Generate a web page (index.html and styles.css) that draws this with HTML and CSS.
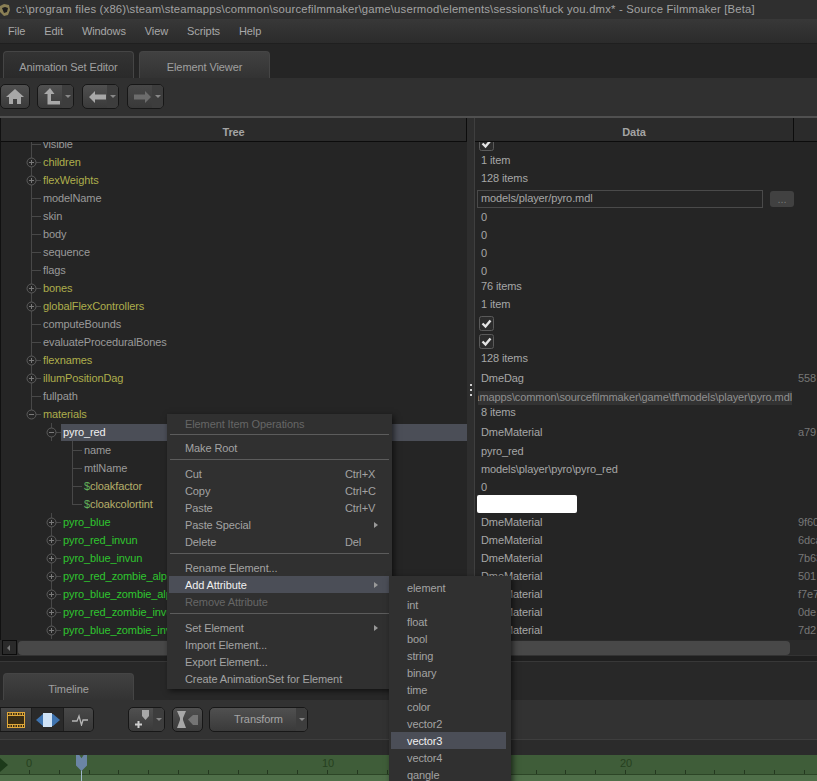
FILE: index.html
```html
<!DOCTYPE html>
<html lang="en">
<head>
<meta charset="utf-8">
<title>Source Filmmaker</title>
<link rel="stylesheet" href="styles.css">
</head>
<body>
<svg class="defs" width="0" height="0">
  <symbol id="plus" viewBox="0 0 11 11"><circle cx="5.5" cy="5.5" r="4.5" fill="#262626" stroke="#5c5c5c"/><path d="M3 5.5h5M5.5 3v5" stroke="#7a7a7a"/></symbol>
  <symbol id="minus" viewBox="0 0 11 11"><circle cx="5.5" cy="5.5" r="4.5" fill="#262626" stroke="#5c5c5c"/><path d="M3 5.5h5" stroke="#7a7a7a"/></symbol>
  <symbol id="check" viewBox="0 0 15 15"><rect x=".5" y=".5" width="14" height="14" rx="2" fill="#2c2c2c" stroke="#5a5a5a"/><path d="M3.5 7.5l3 3 5-6" fill="none" stroke="#e4e4e4" stroke-width="2.4"/></symbol>
</svg>
<div class="app">
  <header class="title">
    <svg class="logo" width="10" height="14" viewBox="0 0 10 14"><path d="M0 3l4-2 5 1 1 5-2 5-4 1-4-4z" fill="#8a7f55"/><path d="M2 5l3-1 3 1-1 4-3 1z" fill="#1d1d1d"/></svg>
    <span>c:\program files (x86)\steam\steamapps\common\sourcefilmmaker\game\usermod\elements\sessions\fuck you.dmx* - Source Filmmaker [Beta]</span>
  </header>
  <nav class="menubar">
    <span>File</span><span>Edit</span><span>Windows</span><span>View</span><span>Scripts</span><span>Help</span>
  </nav>
  <div class="tabs">
    <div class="tab">Animation Set Editor</div>
    <div class="tab on">Element Viewer</div>
  </div>
  <div class="toolbar">
    <button class="btn home"><svg width="18" height="15" viewBox="0 0 18 15"><path d="M9 0L0 8h3v7h4v-5h4v5h4V8h3z" fill="#a8a8a8"/></svg></button>
    <button class="btn drop"><svg width="16" height="17" viewBox="0 0 16 17"><path d="M6 0L0 6h3.500v10.500H16v-3.500H7V6h3.500z" fill="#a8a8a8"/></svg><i></i></button>
    <button class="btn drop"><svg width="17" height="12" viewBox="0 0 17 12"><path d="M6 0L0 6l6 6V8.500h11v-5H6z" fill="#a8a8a8"/></svg><i></i></button>
    <button class="btn drop off"><svg width="17" height="12" viewBox="0 0 17 12"><path d="M11 0l6 6-6 6V8.500H0v-5h11z" fill="#6c6c6c"/></svg><i></i></button>
  </div>
  <main class="panes">
    <section class="pane tree">
      <div class="head">Tree</div>
      <ul class="rows">
        <li class="d1 gr">visible</li>
        <li class="d1 ye"><svg class="exp"><use href="#plus"/></svg>children</li>
        <li class="d1 ye"><svg class="exp"><use href="#plus"/></svg>flexWeights</li>
        <li class="d1 gr">modelName</li>
        <li class="d1 gr">skin</li>
        <li class="d1 gr">body</li>
        <li class="d1 gr">sequence</li>
        <li class="d1 gr">flags</li>
        <li class="d1 ye"><svg class="exp"><use href="#plus"/></svg>bones</li>
        <li class="d1 ye"><svg class="exp"><use href="#plus"/></svg>globalFlexControllers</li>
        <li class="d1 gr">computeBounds</li>
        <li class="d1 gr">evaluateProceduralBones</li>
        <li class="d1 ye"><svg class="exp"><use href="#plus"/></svg>flexnames</li>
        <li class="d1 ye"><svg class="exp"><use href="#plus"/></svg>illumPositionDag</li>
        <li class="d1 gr">fullpath</li>
        <li class="d1 ye last"><svg class="exp"><use href="#minus"/></svg>materials</li>
        <li class="d2 sel"><svg class="exp"><use href="#minus"/></svg><span>pyro_red</span></li>
        <li class="d3 gr">name</li>
        <li class="d3 gr">mtlName</li>
        <li class="d3 ye2"><b>$</b>cloakfactor</li>
        <li class="d3 ye2 last"><b>$</b>cloakcolortint</li>
        <li class="d2 gn"><svg class="exp"><use href="#plus"/></svg>pyro_blue</li>
        <li class="d2 gn"><svg class="exp"><use href="#plus"/></svg>pyro_red_invun</li>
        <li class="d2 gn"><svg class="exp"><use href="#plus"/></svg>pyro_blue_invun</li>
        <li class="d2 gn"><svg class="exp"><use href="#plus"/></svg>pyro_red_zombie_alpha</li>
        <li class="d2 gn"><svg class="exp"><use href="#plus"/></svg>pyro_blue_zombie_alpha</li>
        <li class="d2 gn"><svg class="exp"><use href="#plus"/></svg>pyro_red_zombie_invun</li>
        <li class="d2 gn"><svg class="exp"><use href="#plus"/></svg>pyro_blue_zombie_invun</li>
      </ul>
    </section>
    <div class="split"><i></i><i></i><i></i></div>
    <section class="pane data">
      <div class="head"><span class="c1">Data</span><span class="c2"></span></div>
      <ul class="rows">
        <li class="cb"><svg class="chk"><use href="#check"/></svg></li>
        <li class="up">1 item</li>
        <li class="up">128 items</li>
        <li class="field-row"><span class="field">models/player/pyro.mdl</span><span class="more">...</span></li>
        <li class="dn">0</li>
        <li class="dn">0</li>
        <li class="dn">0</li>
        <li class="dn">0</li>
        <li class="up">76 items</li>
        <li class="up">1 item</li>
        <li class="cb"><svg class="chk"><use href="#check"/></svg></li>
        <li class="cb"><svg class="chk"><use href="#check"/></svg></li>
        <li class="up">128 items</li>
        <li class="m"><span class="v">DmeDag</span><span class="id">558</span></li>
        <li class="path"><span>steamapps\common\sourcefilmmaker\game\tf\models\player\pyro.mdl</span></li>
        <li class="up">8 items</li>
        <li class="m"><span class="v">DmeMaterial</span><span class="id">a79</span></li>
        <li class="dn">pyro_red</li>
        <li class="dn">models\player\pyro\pyro_red</li>
        <li class="dn">0</li>
        <li class="swatch-row"><span class="swatch"></span></li>
        <li class="m"><span class="v">DmeMaterial</span><span class="id">9f60</span></li>
        <li class="m"><span class="v">DmeMaterial</span><span class="id">6dca</span></li>
        <li class="m"><span class="v">DmeMaterial</span><span class="id">7b63</span></li>
        <li class="m"><span class="v">DmeMaterial</span><span class="id">501</span></li>
        <li class="m"><span class="v">DmeMaterial</span><span class="id">f7e7</span></li>
        <li class="m"><span class="v">DmeMaterial</span><span class="id">0de</span></li>
        <li class="m"><span class="v">DmeMaterial</span><span class="id">7d2</span></li>
      </ul>
    </section>
  </main>
  <div class="hscroll"><span class="arrow"></span><span class="thumb"></span></div>
  <div class="gap"></div>
  <div class="tabs low"><div class="tab on">Timeline</div></div>
  <div class="tl-bar">
    <div class="group">
      <button class="seg film"><svg width="18" height="16" viewBox="0 0 18 16"><rect x=".5" y=".5" width="17" height="15" fill="#3a2d14" stroke="#e0a83a"/><path d="M1 3.500h16M1 12.500h16M3 1v2M5.500 1v2M8 1v2M10.500 1v2M13 1v2M15.500 1v2M3 13v2M5.500 13v2M8 13v2M10.500 13v2M13 13v2M15.500 13v2" stroke="#e0a83a"/></svg></button>
      <button class="seg act"><svg width="24" height="14" viewBox="0 0 24 14"><path d="M0 7l7-6h10l7 6-7 6H7z" fill="#3f74b0"/><rect x="7" y="0" width="9" height="14" fill="#cfe2f6"/></svg></button>
      <button class="seg"><svg width="16" height="12" viewBox="0 0 16 12"><path d="M0 7h5l2-5 2.500 9 1.500-5h5" fill="none" stroke="#b5b5b5" stroke-width="1.300"/></svg></button>
    </div>
    <button class="btn drop key"><svg width="18" height="19" viewBox="0 0 18 19"><path d="M7 0h7v6l-3.500 4L7 6z" fill="#a8a8a8"/><path d="M0 14.500h7M3.500 11v7" stroke="#cfcfcf" stroke-width="2"/></svg><i></i></button>
    <button class="btn hg"><svg width="22" height="17" viewBox="0 0 22 17"><path d="M0 0h9L6 7v2l3 8H0l3-8V7z" fill="#a8a8a8"/><path d="M11 8.500l5-4.500h5v10h-5z" fill="#757575"/></svg></button>
    <button class="btn drop tf"><span>Transform</span><i></i></button>
  </div>
  <div class="tl-line"></div>
  <div class="ruler">
    <span class="mark"></span>
    <span class="num n0">0</span><span class="num n10">10</span><span class="num n20">20</span>
    <span class="lower"></span>
    <span class="play-line"></span>
    <span class="head-mark"></span>
  </div>
</div>

<div class="menu ctx">
  <div class="it dis">Element Item Operations</div>
  <hr>
  <div class="it">Make Root</div>
  <hr>
  <div class="it">Cut<kbd>Ctrl+X</kbd></div>
  <div class="it">Copy<kbd>Ctrl+C</kbd></div>
  <div class="it">Paste<kbd>Ctrl+V</kbd></div>
  <div class="it sub">Paste Special</div>
  <div class="it">Delete<kbd>Del</kbd></div>
  <hr>
  <div class="it">Rename Element...</div>
  <div class="it sub hi">Add Attribute</div>
  <div class="it dis">Remove Attribute</div>
  <hr>
  <div class="it sub">Set Element</div>
  <div class="it">Import Element...</div>
  <div class="it">Export Element...</div>
  <div class="it">Create AnimationSet for Element</div>
</div>
<div class="menu attrs">
  <div class="it">element</div>
  <div class="it">int</div>
  <div class="it">float</div>
  <div class="it">bool</div>
  <div class="it">string</div>
  <div class="it">binary</div>
  <div class="it">time</div>
  <div class="it">color</div>
  <div class="it">vector2</div>
  <div class="it hi">vector3</div>
  <div class="it">vector4</div>
  <div class="it">qangle</div>
</div>
</body>
</html>
```
FILE: styles.css
```css
* { box-sizing: border-box; }
html, body { margin: 0; height: 100%; overflow: hidden; background: #2a2a2a; }
body { font: 11px/1 "Liberation Sans", sans-serif; letter-spacing: -.1px; color: #a9a9a9; position: relative; }
ul { list-style: none; margin: 0; padding: 0; }
button { font: inherit; color: inherit; padding: 0; letter-spacing: inherit; }
.defs { position: absolute; }
.app { width: 817px; height: 781px; display: flex; flex-direction: column; overflow: hidden; }

.title { height: 19px; background: #2f2f2f; display: flex; align-items: center; gap: 6px; font-size: 11.300px; letter-spacing: .19px; color: #a3a3a3; white-space: nowrap; overflow: hidden; }
.logo { flex: none; }
.menubar { height: 25px; display: flex; align-items: center; padding: 1px 0 0 8px; gap: 19px; background: linear-gradient(#383838, #2b2b2b); border-bottom: 1px solid #1f1f1f; color: #a8a8a8; }
.tabs { height: 34px; display: flex; align-items: flex-end; gap: 5px; padding-left: 3px; background: #252525; }
.tab { width: 131px; height: 27px; padding-top: 4px; display: flex; align-items: center; justify-content: center; border: 1px solid #454545; border-bottom: 0; border-radius: 4px 4px 0 0; background: linear-gradient(#333, #2a2a2a); color: #a0a0a0; }
.tab.on { background: linear-gradient(#414141, #333); }
.toolbar { height: 38px; background: #303030; display: flex; align-items: center; gap: 7px; padding-bottom: 1px; }
.toolbar .btn:nth-child(3), .toolbar .btn:nth-child(4) { margin-left: 1px; }

.btn { height: 25px; border: 1px solid #171717; border-radius: 5px; background: linear-gradient(#505050, #3a3a3a); display: flex; align-items: center; position: relative; cursor: default; }
.home { width: 30px; justify-content: center; }
.drop { width: 37px; padding-left: 6px; }
.drop i { position: absolute; right: 0; top: 0; bottom: 0; width: 11px; background: #3d3d3d; border-radius: 0 4px 4px 0; }
.drop i::after { content: ""; position: absolute; left: 3px; top: 10px; border: 3px solid transparent; border-top: 3px solid #888; border-bottom: 0; }
.off { background: linear-gradient(#474747, #393939); }

.panes { height: 524px; flex: none; display: flex; border-top: 2px solid #505050; }
.pane { min-width: 0; display: flex; flex-direction: column; background: #252525; overflow: hidden; }
.tree { width: 467px; border-left: 1px solid #111; }
.data { flex: 1; }
.split { width: 8px; padding-top: 22px; background: #2e2e2e; display: flex; flex-direction: column; align-items: center; justify-content: center; gap: 3px; border-right: 1px solid #3f3f3f; }
.split i { width: 2px; height: 2px; background: #cfcfcf; }
.head { height: 24px; flex: none; padding-top: 5px; display: flex; align-items: center; justify-content: center; background: #2b2b2b; border-bottom: 1px solid #0c0c0c; border-right: 1px solid #0c0c0c; font-weight: 700; color: #a4a4a4; position: relative; z-index: 1; }
.data .head { justify-content: flex-start; border-right: 0; padding-top: 0; }
.c1 { width: 319px; height: 100%; padding-top: 5px; display: flex; align-items: center; justify-content: center; border-right: 1px solid #0c0c0c; }
.rows { margin-top: -7px; }
.rows li { height: 18px; display: flex; align-items: center; white-space: nowrap; position: relative; }
.tree .rows li { padding-top: 1px; }

.d1 { padding-left: 42px; }
.d2 { padding-left: 62px; }
.d3 { padding-left: 83px; }
.tree li::before { content: ""; position: absolute; top: 0; bottom: 0; border-left: 1px solid #484848; }
.tree li::after { content: ""; position: absolute; top: 9px; width: 10px; border-top: 1px solid #484848; }
.d1::before, .d1::after { left: 30px; }
.d2::before, .d2::after { left: 50px; }
.d3::before, .d3::after { left: 71px; }
.tree li.last::before { bottom: 9px; }
.exp { position: absolute; width: 11px; height: 11px; top: 4px; z-index: 1; }
.d1 .exp { left: 25px; }
.d2 .exp { left: 45px; }
.gr { color: #9a9a9a; }
.ye { color: #aeae4c; }
.ye2 { color: #b6af6a; }
.ye2 b { font-weight: 400; color: #62b25a; }
.gn { color: #2fc52f; }
.sel { padding-left: 60px; }
.tree .rows li.sel { padding-top: 0; }
.sel span { flex: 1; height: 17px; padding: 1px 0 0 2px; background: #4b4e57; color: #f0f0f0; display: flex; align-items: center; }

.data li { padding-left: 6px; color: #a7a7a7; }
.chk { width: 15px; height: 15px; margin-left: -2px; flex: none; }
.cb { padding-bottom: 1px; }
.up { padding-bottom: 3px; }
.dn { padding-top: 3px; }
.m { padding-top: 1px; }
.field-row { padding-top: 2px; }
.data li.field-row { padding-left: 2px; }
.field { width: 286px; height: 18px; border: 1px solid #4a4a4a; padding: 0 0 1px 3px; display: flex; align-items: center; }
.more { width: 24px; height: 16px; margin-left: 7px; background: #414141; border-radius: 3px; color: #777; display: flex; justify-content: center; align-items: center; }
.v { width: 317px; flex: none; }
.id { color: #777; }
.data li.path { padding-left: 3px; padding-top: 3px; overflow: hidden; }
.path span { width: 314px; height: 14px; background: #333; overflow: hidden; display: flex; align-items: center; justify-content: flex-end; color: #8f8f8f; }
.data li.swatch-row { padding-left: 2px; }
.swatch { width: 100px; height: 18px; background: #fff; border-radius: 2px; }

.hscroll { height: 15px; flex: none; background: #2a2a2a; display: flex; align-items: center; padding-left: 2px; gap: 1px; }
.arrow { width: 15px; height: 15px; border: 1px solid #0c0c0c; position: relative; }
.arrow::after { content: ""; position: absolute; left: 4px; top: 4px; border: 3px solid transparent; border-right: 3px solid #777; border-left: 0; }
.thumb { width: 772px; height: 14px; background: #484848; border-radius: 4px; }
.gap { height: 6px; flex: none; background: #1f1f1f; border-top: 1px solid #333; }
.low { height: 39px; flex: none; background: #282828; border-top: 1px solid #383838; }
.tl-bar { height: 39px; flex: none; background: #323232; display: flex; align-items: center; gap: 7px; }
.group { display: flex; width: 94px; height: 25px; border: 1px solid #171717; border-left: 0; border-radius: 0 5px 5px 0; overflow: hidden; margin-right: 27px; }
.seg { width: 32px; flex: none; border: 0; border-left: 1px solid #1f1f1f; background: linear-gradient(#484848, #383838); display: flex; align-items: center; justify-content: center; }
.seg.film { width: 31px; }
.seg.act { background: #2a2a2a; }
.key { width: 37px; }
.hg { width: 31px; justify-content: center; margin-right: -1px; }
.tf { width: 99px; justify-content: center; padding: 0; color: #a5a5a5; }
.tl-line { height: 16px; flex: none; background: #2b2b2b; border-top: 1px solid #3e3e3e; }
.ruler { flex: 1; position: relative; background-color: #3f5d39; background-image: repeating-linear-gradient(90deg, #24381f 0 1px, transparent 1px 29.800px); background-position: 29px 15px; background-size: 100% 4px; background-repeat: no-repeat; }
.ruler .mark { position: absolute; left: 0; top: 3px; border: 7px solid transparent; border-left: 8px solid #1d3a1a; border-right: 0; }
.num { position: absolute; top: 3px; color: #26401f; transform: translateX(-50%); }
.n0 { left: 29px; }
.n10 { left: 328px; }
.n20 { left: 626px; }
.lower { position: absolute; left: 0; right: 0; top: 19px; bottom: 0; background: #4f6f49; border-top: 1px solid #2c4526; }
.play-line { position: absolute; left: 81px; top: 10px; bottom: 0; border-left: 1px solid #9fb6cc; }
.head-mark { position: absolute; left: 76px; top: 0; width: 11px; height: 16px; background: #6b85a5; clip-path: polygon(0 0, 30% 0, 50% 20%, 70% 0, 100% 0, 100% 65%, 50% 100%, 0 65%); }

.menu { position: absolute; background: #303030; box-shadow: 2px 2px 6px rgba(0,0,0,.6); color: #a3a3a3; }
.ctx { left: 167px; top: 414px; width: 225px; height: 275px; padding: 1px 2px; z-index: 2; }
.attrs { left: 389px; top: 576px; width: 122px; height: 215px; padding: 3px 5px 3px 2px; z-index: 3; }
.it { height: 17px; padding: 1px 0 0 16px; display: flex; align-items: center; position: relative; white-space: nowrap; }
.dis { color: #666; }
.hi { background: #4b4e57; color: #f0f0f0; }
.ctx hr { border: 0; border-top: 1px solid #5c5c5c; margin: 3px 1px 5px; height: 0; }
.ctx hr:first-of-type { margin: 2px 1px 4px; }
kbd { font: inherit; position: absolute; left: 176px; }
.sub::after { content: ""; position: absolute; right: 12px; top: 6px; border: 3px solid transparent; border-left: 4px solid #999; border-right: 0; }
```
